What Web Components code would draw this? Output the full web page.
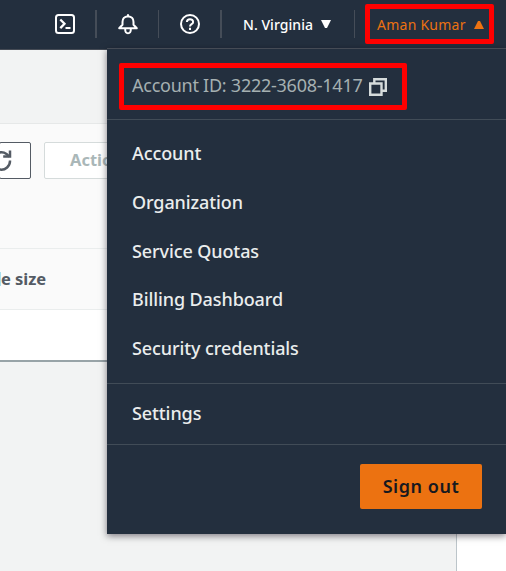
<!DOCTYPE html>
<html lang="en"><head><meta charset="utf-8"><title>Console</title>
<style>
html,body{margin:0;height:571px;overflow:hidden}
body{position:relative;background:#f2f3f3;font-family:"Noto Sans","Open Sans",sans-serif}
</style></head><body>
<console-page></console-page>
<script>
const define = (name, html) => customElements.define(name, class extends HTMLElement {
  constructor() { super(); this.attachShadow({mode:'open'}).innerHTML = html; }
});

define('nav-icon', `<style>:host{display:flex;align-items:center;justify-content:center;width:62px;height:28px;box-sizing:border-box;border-right:1px solid #454d58}:host([wide]){border-right-width:2px}</style><slot></slot>`);

define('top-nav', `<style>
:host{display:block;height:49px;background:#232f3e;border-bottom:1px solid #454b55;color:#fff}
.bar{display:flex;padding-top:10px;height:28px}
nav-icon:first-child{margin-left:34px;width:63px}
svg{display:block}
.item{display:flex;align-items:center;font-size:14px;font-weight:500;line-height:28px;white-space:nowrap}
.item span{padding-top:2px}
.region{width:133px;box-sizing:border-box;padding-left:21px;border-right:1px solid #454d58}
.region svg{margin:0 0 0 8px}
.region span{width:70px;letter-spacing:.05px}
.user{padding-left:22px;color:#ec7211}
.user span{width:90px;letter-spacing:.25px;font-weight:400}
.user svg{margin:2px 0 0 7px}
</style>
<div class="bar">
<nav-icon wide><svg width="22" height="22" viewBox="0 0 22 22" fill="none" stroke="#fff" stroke-width="2"><rect x="2" y="2" width="18" height="18" rx="2.5"/><path d="M6.3 6.5l4.2 4.3-4.2 4.3" stroke-width="2.3"/><path d="M11.5 15H16.5"/></svg></nav-icon>
<nav-icon><svg width="22" height="22" viewBox="0 0 22 22" fill="none" stroke="#fff" stroke-width="2" stroke-linejoin="round"><path d="M2.2 15.3L5.5 11.7V9C5.5 5.8 7.5 3.6 11 3.3 14.5 3.6 16.5 5.8 16.5 9V11.7L19.8 15.3Z"/><path d="M11 3.5V1.2M8.2 15.5C8 19.3 9.2 20.2 11 20.2S14 19.3 13.8 15.5"/></svg></nav-icon>
<nav-icon wide style="width:63px"><svg width="22" height="22" viewBox="0 0 22 22" fill="none" stroke="#fff" stroke-width="2"><circle cx="11" cy="11" r="9"/><path d="M7.9 9.1C7.9 5.3 14.1 5.3 14.1 8.9 14.1 11.3 11 11 11 13.4"/><path d="M11 14.8V17"/></svg></nav-icon>
<div class="item region"><span>N. Virginia</span><svg width="10" height="8"><path d="M0 0H10L6 8H4Z" fill="#fff"/></svg></div>
<div class="item user"><span>Aman Kumar</span><svg width="10" height="8"><path d="M0 8H10L6 0H4Z" fill="#ec7211"/></svg></div>
</div>`);

define('page-content', `<style>
:host{display:block}
.card{margin-top:73px;border-top:1px solid #e6e8e8;border-bottom:2px solid #98a3a7;background:#fff;height:236px}
.tools{display:flex;gap:13px;box-sizing:border-box;height:124px;padding-top:18px;background:#fafafa}
.btn{box-sizing:border-box;height:37px;background:#fff;border:1px solid #545b64;border-radius:2px}
.refresh{width:32px;margin-left:-1px;overflow:hidden}
.refresh svg{display:block;margin:7px 0 0 -10px}
.actions{width:110px;border-color:#d5dbdb;color:#aab7b8;font:bold 16.5px/34px "Noto Sans",sans-serif;padding-left:25px}
.head{display:flex;align-items:center;box-sizing:border-box;height:62px;border:solid #eaeded;border-width:1px 0;background:#fafafa;color:#545b64;font-weight:700;font-size:16.5px}
.mark{width:1px;height:14px;background:#a9e0ee}
.head span{letter-spacing:-.05px;padding-bottom:2px}
</style><div class="card">
<div class="tools"><div class="btn refresh"><svg width="22" height="22" viewBox="0 0 22 22" fill="none" stroke="#545b64" stroke-width="2.5"><path d="M20 10.5A8.7 8.7 0 1 1 16.5 4L19.5 6.6"/><path d="M20 0.5V6.5H13.2"/></svg></div><div class="btn actions">Actions</div></div>
<div class="head"><i class="mark"></i><span>e size</span></div></div>`);

define('menu-section', `<style>:host{display:block;border-bottom:1px solid #414c57;box-sizing:border-box}</style><slot></slot>`);
define('menu-item', `<style>:host{display:flex;align-items:center;height:48.75px;padding-left:25px;color:#eaeded;font-size:18px;font-weight:500;letter-spacing:-.1px;white-space:nowrap}</style><slot></slot>`);

define('account-menu', `<style>
:host{position:absolute;left:107px;top:48px;right:0;height:486px;box-sizing:border-box;border-top:1px solid #454b55;background:#232f3e;box-shadow:0 2px 7px #0a001080}
.id{height:71px;display:flex;align-items:center;padding:2px 0 0 25px;color:#a5b0b1;font-size:18px;white-space:nowrap}
.id span{width:237px;letter-spacing:-.25px}
.id svg{margin-top:3px}
.links{height:264px;padding-top:8.7px}
.settings{height:61px;padding-top:5px}
.foot{display:flex;justify-content:flex-end;padding:19px 24px}
button{width:122px;height:45px;border:0;border-radius:2px;background:#ec7211;color:#16191f;font:600 18px "Noto Sans",sans-serif;letter-spacing:.55px;padding:0 0 2px}
</style>
<menu-section class="id"><span>Account ID: 3222-3608-1417</span><svg width="18" height="18" viewBox="0 0 18 18" fill="none" stroke="#d5dbdb" stroke-width="2.4"><path d="M1.2 5.5H12.5V16.8H1.2Z"/><path d="M5.3 5V1.2H16.8V12.7H13"/></svg></menu-section>
<menu-section class="links"><menu-item>Account</menu-item><menu-item>Organization</menu-item><menu-item>Service Quotas</menu-item><menu-item>Billing Dashboard</menu-item><menu-item>Security credentials</menu-item></menu-section>
<menu-section class="settings"><menu-item>Settings</menu-item></menu-section>
<div class="foot"><button>Sign out</button></div>`);

define('highlight-box', `<style>:host{position:absolute;box-sizing:border-box;border:5px solid #f00;border-radius:2px}</style>`);

define('console-page', `<style>
:host{display:block;height:571px}
.panel{position:absolute;left:456px;top:500px;right:0;bottom:0;border-left:1px solid #bcc5ca;background:#fff}
</style><top-nav></top-nav><page-content></page-content><div class="panel"></div><account-menu></account-menu>
<highlight-box style="left:365px;top:4px;width:129px;height:40px"></highlight-box>
<highlight-box style="left:119px;top:63px;width:288px;height:47px"></highlight-box>`);
</script></body></html>
